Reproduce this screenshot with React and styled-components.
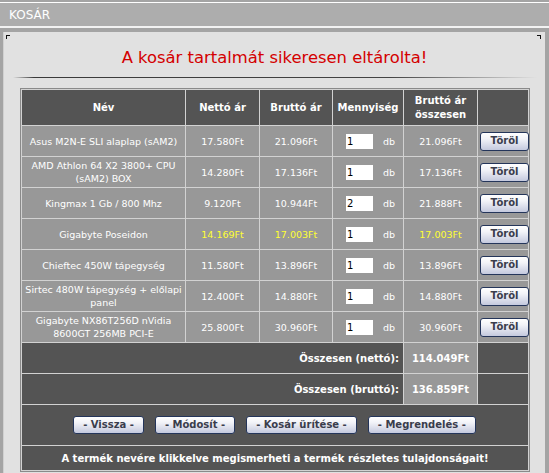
import React from 'react';
import styled, { createGlobalStyle } from 'styled-components';

const GlobalStyle = createGlobalStyle`
  html, body {
    margin: 0;
    padding: 0;
    background: #a4a4a4;
  }
  body {
    font-family: "DejaVu Sans", Verdana, sans-serif;
  }
`;

const Page = styled.div`
  width: 549px;
  height: 473px;
  overflow: hidden;
  padding-top: 2px;
  box-sizing: border-box;
`;

const HeaderBar = styled.div`
  height: 23px;
  display: flex;
  align-items: center;
  padding-left: 9px;
  margin-bottom: 4px;
  background: #adadad;
  border-top: 1px solid #fff;
  border-bottom: 2px solid #f2f2f2;
  color: #fff;
  font-size: 12px;
`;

const Panel = styled.div`
  position: relative;
  width: 542px;
  min-height: 460px;
  margin-left: 3px;
  padding-top: 16px;
  box-sizing: border-box;
  background: #e1e1e1;
  border-left: 1px solid #d0d0d0;
`;

const Corner = styled.span`
  position: absolute;
  top: 3px;
  ${({ side }) => (side === 'left' ? 'left: 2px;' : 'right: 4px;')}
  width: 4px;
  height: 4px;
  border-top: 1px solid #111;
  ${({ side }) => (side === 'left' ? 'border-left' : 'border-right')}: 1px solid #111;
  box-sizing: border-box;
`;

const Title = styled.h1`
  margin: 0;
  text-align: center;
  color: #d40000;
  font-size: 16.4px;
  font-weight: normal;
  line-height: 20px;
`;

const Divider = styled.div`
  height: 1px;
  margin: 9px 8px 10px 9px;
  background: linear-gradient(to right, rgba(40, 40, 40, 0) 0%, #3a3a3a 4%, #444 72%, rgba(60, 60, 60, 0) 100%);
`;

const TableFrame = styled.div`
  width: 510px;
  margin-left: 16px;
  border: 1px solid #8a8a8a;
  box-sizing: border-box;
`;

const Table = styled.table`
  width: 100%;
  table-layout: fixed;
  border-collapse: collapse;
  background: #545454;
  color: #fff;
`;

const HeadCell = styled.th`
  height: 35px;
  padding: 0 3px;
  border: 1px solid #d2d2d2;
  font-size: 10px;
  font-weight: bold;
  line-height: 14px;
  text-align: center;
`;

const Cell = styled.td`
  height: 30px;
  padding: 0 2px;
  border: 1px solid #d2d2d2;
  background: ${({ dark }) => (dark ? '#545454' : '#989898')};
  color: ${({ highlight }) => (highlight ? '#ffff33' : '#fff')};
  font-size: ${({ strong }) => (strong ? '10px' : '9.5px')};
  font-weight: ${({ strong }) => (strong ? 'bold' : 'normal')};
  line-height: 13px;
  text-align: ${({ align }) => align || 'center'};
  padding-right: ${({ align }) => (align === 'right' ? '4px' : '2px')};
`;

const QtyBox = styled.div`
  display: flex;
  align-items: center;
  gap: 10px;
  padding-left: 11px;
`;

const QtyInput = styled.input`
  width: 27px;
  height: 15px;
  padding: 0 1px;
  border: none;
  box-sizing: border-box;
  background: #fff;
  color: #000;
  font-family: "DejaVu Sans", sans-serif;
  font-size: 10px;
  outline: none;
`;

const Unit = styled.span`
  font-size: 9.5px;
`;

const Button = styled.button`
  height: ${({ small }) => (small ? '19px' : '18px')};
  padding: ${({ small }) => (small ? '0' : '0 9px')};
  width: ${({ small }) => (small ? '49px' : 'auto')};
  border: 1px solid #24355a;
  border-radius: 3px;
  background: linear-gradient(to bottom, #ffffff 0%, #f2f3f8 35%, #c4c9de 100%);
  color: #3a3d4c;
  font-family: "DejaVu Sans", sans-serif;
  font-size: 10px;
  font-weight: bold;
  line-height: 16px;
  cursor: pointer;
`;

const ActionCell = styled.td`
  height: 40px;
  padding: 0;
  border: 1px solid #d2d2d2;
`;

const ActionBar = styled.div`
  display: flex;
  justify-content: center;
  gap: 11px;
  padding-right: 1px;
`;

const NoteCell = styled.td`
  height: 24px;
  padding: 0;
  border: 1px solid #d2d2d2;
  font-size: 10px;
  font-weight: bold;
  text-align: center;
`;

const items = [
  { name: 'Asus M2N-E SLI alaplap (sAM2)', net: '17.580Ft', gross: '21.096Ft', qty: 1, total: '21.096Ft' },
  { name: 'AMD Athlon 64 X2 3800+ CPU (sAM2) BOX', net: '14.280Ft', gross: '17.136Ft', qty: 1, total: '17.136Ft' },
  { name: 'Kingmax 1 Gb / 800 Mhz', net: '9.120Ft', gross: '10.944Ft', qty: 2, total: '21.888Ft' },
  { name: 'Gigabyte Poseidon', net: '14.169Ft', gross: '17.003Ft', qty: 1, total: '17.003Ft', highlight: true },
  { name: 'Chieftec 450W tápegység', net: '11.580Ft', gross: '13.896Ft', qty: 1, total: '13.896Ft' },
  { name: 'Sirtec 480W tápegység + előlapi panel', net: '12.400Ft', gross: '14.880Ft', qty: 1, total: '14.880Ft' },
  { name: 'Gigabyte NX86T256D nVidia 8600GT 256MB PCI-E', net: '25.800Ft', gross: '30.960Ft', qty: 1, total: '30.960Ft' },
];

const totals = [
  { label: 'Összesen (nettó):', value: '114.049Ft' },
  { label: 'Összesen (bruttó):', value: '136.859Ft' },
];

const actions = ['- Vissza -', '- Módosít -', '- Kosár ürítése -', '- Megrendelés -'];

const App = () => (
  <Page>
    <GlobalStyle />
    <HeaderBar>KOSÁR</HeaderBar>
    <Panel>
      <Corner side="left" />
      <Corner side="right" />
      <Title>A kosár tartalmát sikeresen eltárolta!</Title>
      <Divider />
      <TableFrame>
        <Table>
          <colgroup>
            <col style={{ width: 164 }} />
            <col style={{ width: 74 }} />
            <col style={{ width: 73 }} />
            <col style={{ width: 71 }} />
            <col style={{ width: 74 }} />
            <col />
          </colgroup>
          <thead>
            <tr>
              <HeadCell>Név</HeadCell>
              <HeadCell>Nettó ár</HeadCell>
              <HeadCell>Bruttó ár</HeadCell>
              <HeadCell>Mennyiség</HeadCell>
              <HeadCell>Bruttó ár összesen</HeadCell>
              <HeadCell />
            </tr>
          </thead>
          <tbody>
            {items.map((item) => (
              <tr key={item.name}>
                <Cell>{item.name}</Cell>
                <Cell highlight={item.highlight}>{item.net}</Cell>
                <Cell highlight={item.highlight}>{item.gross}</Cell>
                <Cell align="left">
                  <QtyBox>
                    <QtyInput defaultValue={item.qty} />
                    <Unit>db</Unit>
                  </QtyBox>
                </Cell>
                <Cell highlight={item.highlight}>{item.total}</Cell>
                <Cell>
                  <Button small>Töröl</Button>
                </Cell>
              </tr>
            ))}
            {totals.map((row) => (
              <tr key={row.label}>
                <Cell dark strong align="right" colSpan={4}>
                  {row.label}
                </Cell>
                <Cell strong>{row.value}</Cell>
                <Cell dark />
              </tr>
            ))}
            <tr>
              <ActionCell colSpan={6}>
                <ActionBar>
                  {actions.map((label) => (
                    <Button key={label}>{label}</Button>
                  ))}
                </ActionBar>
              </ActionCell>
            </tr>
            <tr>
              <NoteCell colSpan={6}>
                A termék nevére klikkelve megismerheti a termék részletes tulajdonságait!
              </NoteCell>
            </tr>
          </tbody>
        </Table>
      </TableFrame>
    </Panel>
  </Page>
);

export default App;
